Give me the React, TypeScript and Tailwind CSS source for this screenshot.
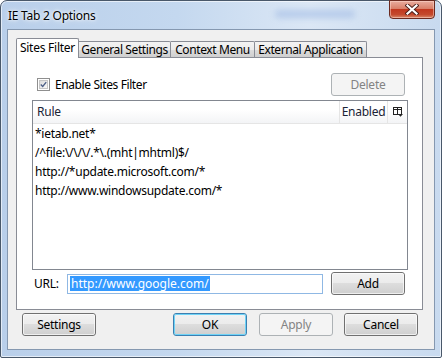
import React from "react";

const font = { fontFamily: '"Noto Sans", "Open Sans", sans-serif' };

function Btn({
  label,
  disabled = false,
  def = false,
  className = "",
}: {
  label: string;
  disabled?: boolean;
  def?: boolean;
  className?: string;
}) {
  if (disabled) {
    return (
      <div
        className={`h-[23px] w-[74px] rounded-[3px] border border-[#adb2b5] bg-[#f4f4f4] flex items-center justify-center text-[12px] text-[#838383] ${className}`}
      >
        {label}
      </div>
    );
  }
  return (
    <div
      className={`h-[23px] w-[74px] rounded-[3px] border ${
        def ? "border-[#3c7fb1]" : "border-[#707070]"
      } bg-[linear-gradient(to_bottom,#f2f2f2_0%,#ebebeb_50%,#dddddd_50%,#cfcfcf_100%)] flex items-center justify-center text-[12px] text-black ${className}`}
    >
      <div
        className={`w-full h-full rounded-[2px] border ${
          def ? "border-[#6fd3f6]" : "border-[#fcfcfc]/70"
        } flex items-center justify-center`}
      >
        {label}
      </div>
    </div>
  );
}

export default function App() {
  const rows = [
    "*ietab.net*",
    "/^file:\\/\\/\\/.*\\.(mht|mhtml)$/",
    "http://*update.microsoft.com/*",
    "http://www.windowsupdate.com/*",
  ];
  const tabBg =
    "bg-[linear-gradient(to_bottom,#f3f3f3_0%,#ebebeb_50%,#dddddd_50%,#cfcfcf_100%)]";
  return (
    <div className="w-[442px] h-[358px] bg-white tracking-[-0.25px]" style={font}>
      <div className="w-full h-full rounded-t-[7px] rounded-b-[2px] border border-[#49586a] bg-[linear-gradient(to_right,#b9cfea_0%,#c4d8ef_40%,#dbe7f5_70%,#c8daef_100%)] flex flex-col px-[6px] pb-[7px] shadow-[inset_0_0_0_1px_rgba(255,255,255,0.6)]">
        {/* title bar */}
        <div className="h-[28px] flex items-start relative">
          <div className="pl-[1px] pt-[6px] text-[12px] text-black whitespace-nowrap [text-shadow:0_0_6px_#ffffff,0_0_3px_#ffffff]">
            IE Tab 2 Options
          </div>
          <div className="ml-[180px] mt-[9px] w-[80px] h-[8px] rounded-full bg-[#a8c0e6] blur-[3px] opacity-70" />
          <div className="ml-auto -mt-px w-[46px] h-[19px] rounded-b-[4px] border border-[#6b2a20] bg-[linear-gradient(to_bottom,#e9ad9f_0%,#d9806a_45%,#c1381f_50%,#c44a2e_80%,#d98a6b_100%)] flex items-center justify-center shadow-[inset_0_0_0_1px_rgba(255,220,210,0.5)]">
            <svg width="14" height="11" viewBox="0 0 14 11">
              <path
                d="M2.5 1.5 L11.5 9.5 M11.5 1.5 L2.5 9.5"
                stroke="#4a1f1a"
                strokeWidth="4"
                strokeLinecap="square"
              />
              <path
                d="M2.5 1.5 L11.5 9.5 M11.5 1.5 L2.5 9.5"
                stroke="#ffffff"
                strokeWidth="2.2"
                strokeLinecap="square"
              />
            </svg>
          </div>
        </div>
        {/* client area */}
        <div className="flex-1 border border-[#8598b0] bg-[#f0f0f0] flex flex-col text-[12px] text-black">
          {/* tabs */}
          <div className="mt-[8px] ml-[8px] h-[19px] flex items-start whitespace-nowrap">
            <div className="relative z-10 w-[63px] h-[20px] border border-b-0 border-[#898c95] bg-white rounded-t-[2px] flex items-center justify-center pb-[1px]">
              Sites Filter
            </div>
            <div className={`mt-[3px] w-[92px] h-[16px] border border-l-0 border-b-0 border-[#898c95] ${tabBg} flex items-center justify-center rounded-tr-[2px] tracking-[-0.4px]`}>
              General Settings
            </div>
            <div className={`mt-[3px] w-[84px] h-[16px] border border-l-0 border-b-0 border-[#898c95] ${tabBg} flex items-center justify-center rounded-tr-[2px] tracking-[-0.4px]`}>
              Context Menu
            </div>
            <div className={`mt-[3px] w-[112px] h-[16px] border border-l-0 border-b-0 border-[#898c95] ${tabBg} flex items-center justify-center rounded-tr-[2px] tracking-[-0.4px]`}>
              External Application
            </div>
          </div>
          {/* panel */}
          <div className="ml-[8px] w-[407px] h-[253px] border border-[#898c95] bg-white flex flex-col px-[15px] pt-[15px]">
            <div className="h-[23px] flex items-center">
              <div className="ml-[5px] w-[13px] h-[13px] border border-[#8f8f8f] bg-white p-px">
                <div className="w-full h-full border border-[#c6c6c6] bg-[linear-gradient(135deg,#dcdcdc,#f8f8f8)] flex items-center justify-center">
                  <svg width="9" height="9" viewBox="0 0 9 9">
                    <path
                      d="M1 4.5 L3.5 7 L8 1.5"
                      stroke="#4b5e86"
                      strokeWidth="1.7"
                      fill="none"
                    />
                  </svg>
                </div>
              </div>
              <span className="ml-[5px] tracking-[-0.4px]">Enable Sites Filter</span>
              <Btn label="Delete" disabled className="ml-auto mr-[2px]" />
            </div>
            {/* list */}
            <div className="mt-[4px] w-[376px] h-[170px] border border-[#828790] bg-white flex flex-col">
              <div className="h-[23px] flex bg-[linear-gradient(to_bottom,#ffffff_0%,#ffffff_40%,#f3f4f6_100%)] border-b border-[#e5e5e5] text-[#1a2335]">
                <div className="w-[307px] pl-[4px] flex items-center border-r border-[#e5e5e5]">
                  Rule
                </div>
                <div className="w-[48px] flex items-center justify-center border-r border-[#e5e5e5]">
                  Enabled
                </div>
                <div className="flex-1 flex items-center justify-center">
                  <svg width="10" height="10" viewBox="0 0 10 10">
                    <rect x="0.5" y="0.5" width="8" height="7" fill="none" stroke="#222" />
                    <path d="M0.5 2.5 H8.5 M4.5 0.5 V7.5" stroke="#222" />
                    <path d="M5 7 H10 L7.5 9.8 Z" fill="#222" />
                  </svg>
                </div>
              </div>
              {rows.map((r) => (
                <div key={r} className="h-[19px] pl-[2px] flex items-center">
                  {r}
                </div>
              ))}
            </div>
            {/* URL row */}
            <div className="mt-[2px] h-[23px] flex items-center">
              <span className="ml-[2px] w-[33px]">URL:</span>
              <div className="w-[256px] h-[20px] border border-[#8fb8e4] bg-white flex items-center pl-[2px]">
                <span className="bg-[#3399ff] text-white leading-[15px] px-px tracking-normal">
                  http://www.google.com/
                </span>
              </div>
              <Btn label="Add" className="ml-auto mr-[2px]" />
            </div>
          </div>
          {/* bottom buttons */}
          <div className="mt-[3px] flex">
            <Btn label="Settings" className="ml-[14px]" />
            <Btn label="OK" def className="ml-[77px]" />
            <Btn label="Apply" disabled className="ml-[12px]" />
            <Btn label="Cancel" className="ml-[11px]" />
          </div>
        </div>
      </div>
    </div>
  );
}
